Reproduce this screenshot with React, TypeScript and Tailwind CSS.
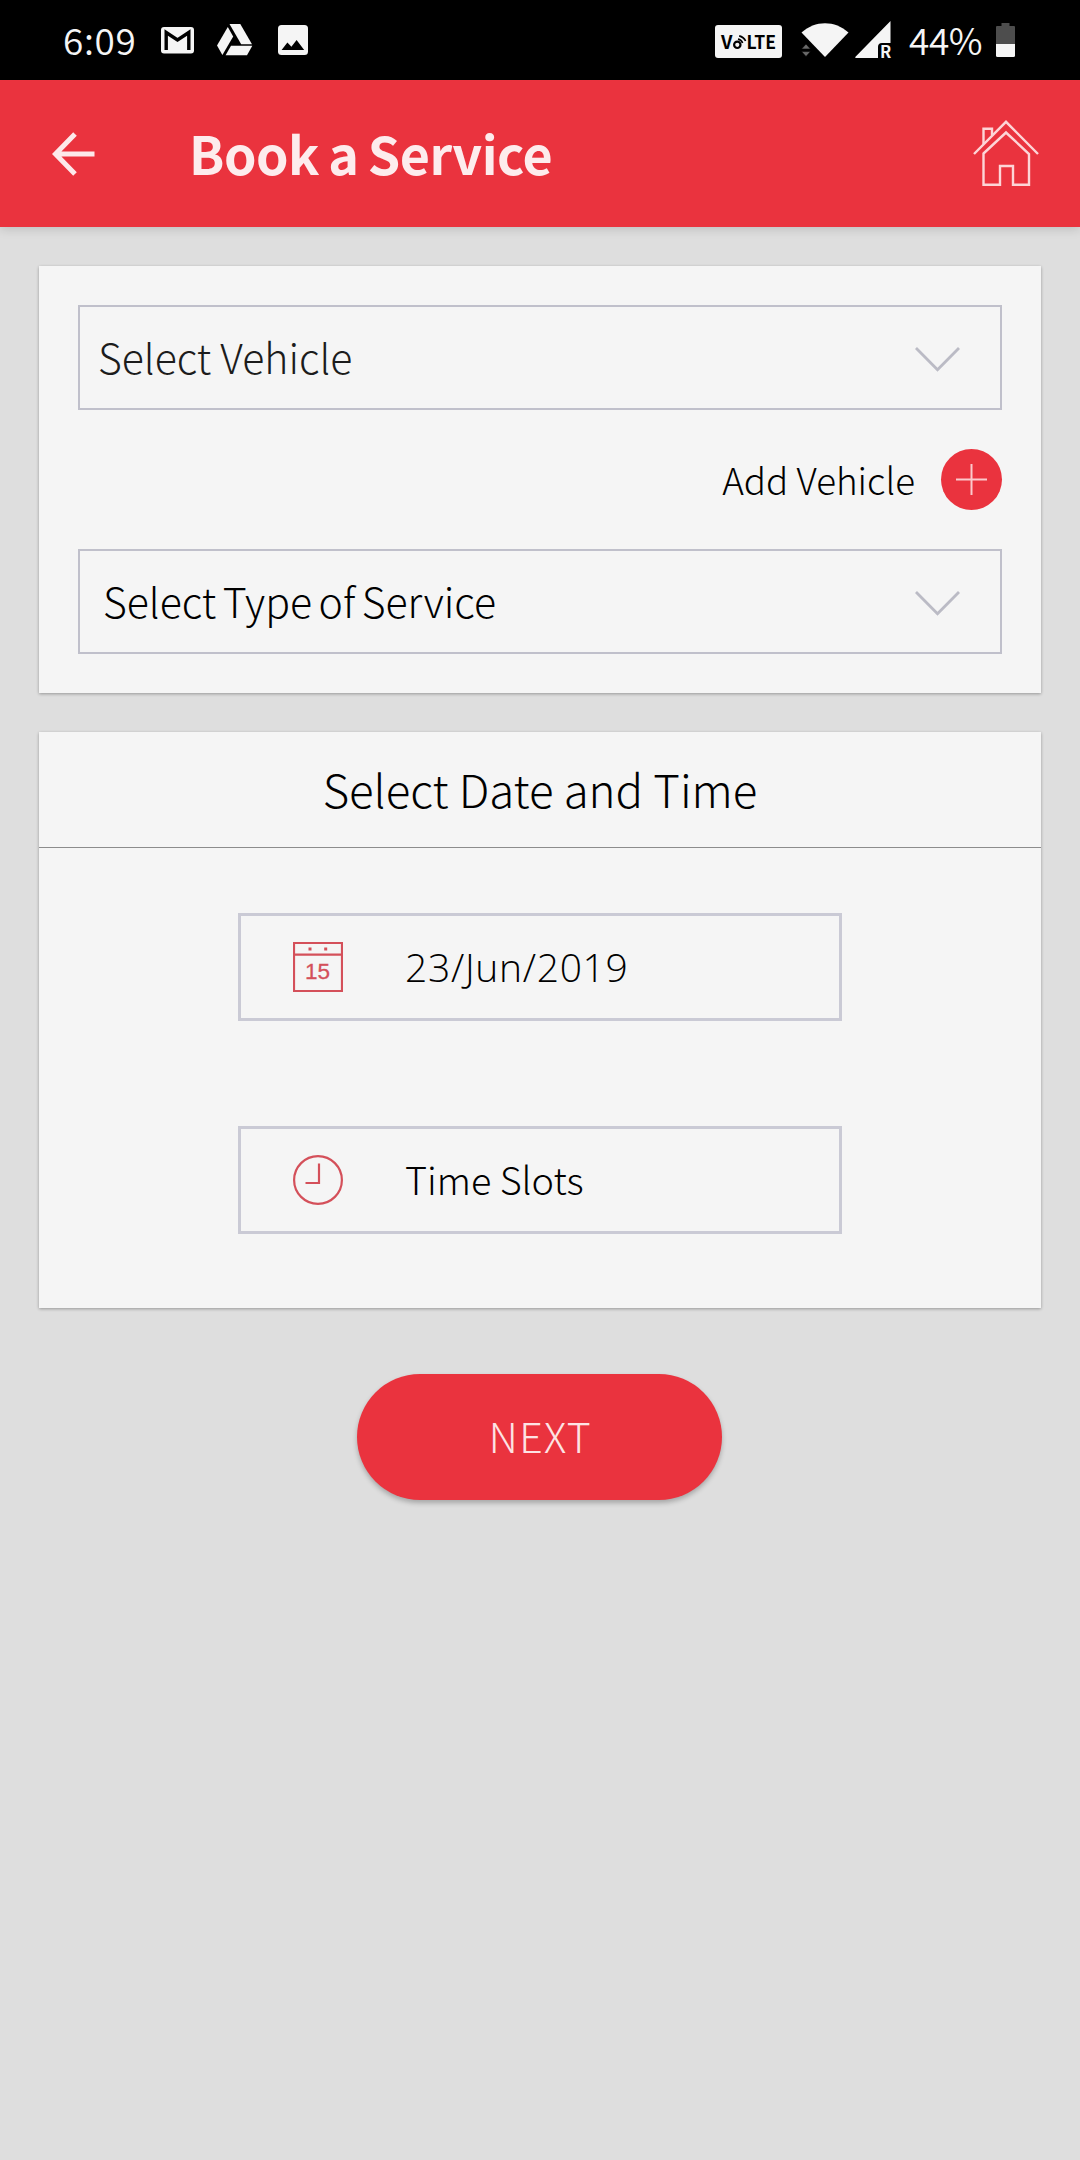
import React from "react";
import clsx from "clsx";

const GmailIcon = () => (
  <svg width="33" height="27" viewBox="0 0 33 27">
    <rect width="33" height="26.5" rx="3" fill="#f5f5f5" />
    <path d="M5.2 23V5.5L16.5 13L27.8 5.5V23" fill="none" stroke="#000" strokeWidth="3.4" />
  </svg>
);

const DriveIcon = () => (
  <svg width="36" height="32" viewBox="0 0 36 32" fill="#f5f5f5">
    <path d="M12.5 0H23.3L35 20.2H24.2Z" />
    <path d="M10.8 3L16.2 12.4L5.4 31L0 21.6Z" />
    <path d="M14 21.8H35.3L30 31.3H8.6Z" />
  </svg>
);

const PhotoIcon = () => (
  <svg width="30" height="30" viewBox="0 0 30 30">
    <rect width="30" height="30" rx="3.5" fill="#f5f5f5" />
    <path d="M3.6 25L9.4 17.6L13.4 21.8L18.6 15L26.2 25Z" fill="#000" />
  </svg>
);

const VolteIcon = () => (
  <svg width="67" height="33" viewBox="0 0 67 33">
    <rect width="67" height="33" rx="3" fill="#f5f5f5" />
    <g fontFamily="Noto Sans CJK SC, sans-serif" fontWeight="700" fontSize="18.5" fill="#000">
      <text x="6" y="23.5">V</text>
      <text x="31.5" y="23.5" textLength="29.5" lengthAdjust="spacingAndGlyphs">LTE</text>
    </g>
    <circle cx="22.3" cy="19.8" r="3.2" fill="none" stroke="#000" strokeWidth="2.2" />
    <path d="M23 14.2A6 6 0 0 1 27.6 18M24.2 10.8A9.5 9.5 0 0 1 30.6 16" fill="none" stroke="#000" strokeWidth="1.7" />
  </svg>
);

const WifiIcon = () => (
  <svg width="48" height="34" viewBox="0 0 48 34">
    <path d="M0.5 9.5C14 -3 34 -3 47.5 9.5L24 34Z" fill="#f5f5f5" />
    <path d="M0.5 26L5 21L9.5 26ZM0.5 28.6L5 33.5L9.5 28.6Z" fill="#6a6a6a" stroke="#000" strokeWidth="0.6" />
  </svg>
);

const SignalIcon = () => (
  <svg className="overflow-visible" width="36" height="38" viewBox="0 0 36 38">
    <path d="M35.5 0V22H27Q23 22 23 26V37H1Q-0.5 37 0.5 35.8Z" fill="#f5f5f5" />
    <text x="25" y="37.2" fontFamily="Noto Sans CJK SC, sans-serif" fontWeight="700" fontSize="16.5" fill="#f5f5f5">
      R
    </text>
  </svg>
);

const BatteryIcon = () => (
  <svg width="19" height="34" viewBox="0 0 19 34">
    <path d="M5.5 0H13.5V3H18Q19 3 19 4V21H0V4Q0 3 1 3H5.5Z" fill="#4d4d4d" />
    <path d="M0 21H19V32.5Q19 34 17.5 34H1.5Q0 34 0 32.5Z" fill="#f5f5f5" />
  </svg>
);

const BackIcon = () => (
  <svg width="44" height="44" viewBox="0 0 44 44" fill="none" stroke="#fde9ea" strokeWidth="5">
    <path d="M43.5 22H4.5M24 2L4.5 22L24 42" />
  </svg>
);

const HomeIcon = () => (
  <svg width="66" height="68" viewBox="0 0 66 68" fill="none" stroke="#fdd5d7" strokeWidth="2.4">
    <path d="M1 34L33 1.8L65 34" />
    <path d="M10.5 24V8.7H19V15" />
    <path d="M10.5 33.5L33 12.5L56 34V64.7H40V46H27V64.7H10.5Z" />
  </svg>
);

const ChevronIcon = () => (
  <svg width="45" height="25" viewBox="0 0 45 25" fill="none" stroke="#bbbbc5" strokeWidth="2.8">
    <path d="M1 1L22.5 22.8L44 1" />
  </svg>
);

const CalendarIcon = () => (
  <svg width="50" height="50" viewBox="0 0 50 50" fill="none" stroke="#d4505a" strokeWidth="2.2">
    <path d="M1 1H49V49H1ZM1 12.7H49" />
    <path d="M15.5 7H18.5M31.2 7H34.2" strokeWidth="3" />
    <text x="12" y="36.8" fontFamily="Liberation Sans, sans-serif" fontWeight="400" fontSize="22.5" fill="#d4505a" stroke="#d4505a" strokeWidth="0.3">
      15
    </text>
  </svg>
);

const ClockIcon = () => (
  <svg width="50" height="50" viewBox="0 0 50 50" fill="none" stroke="#d4505a" strokeWidth="2.2">
    <circle cx="25" cy="25" r="23.9" />
    <path d="M26 8.5V28H12.5" />
  </svg>
);

const Card = ({ className, children }: { className?: string; children: React.ReactNode }) => (
  <div className={clsx("mx-[39px] bg-[#f5f5f5] shadow-[0_1px_3px_rgba(0,0,0,0.32)]", className)}>
    {children}
  </div>
);

const SelectBox = ({ className, label }: { className: string; label: string }) => (
  <button
    className={clsx(
      "w-full h-[105px] flex items-center justify-between border-2 border-[#c0c0cb] pr-[40px] text-[41px] leading-none",
      className
    )}
  >
    <span className="pb-[3px] whitespace-nowrap">{label}</span>
    <span className="pt-[3px]">
      <ChevronIcon />
    </span>
  </button>
);

const PickerBox = ({
  icon,
  label,
  className,
}: {
  icon: React.ReactNode;
  label: string;
  className: string;
}) => (
  <button className="w-[604px] h-[108px] flex items-center gap-[62px] border-3 border-[#cacad5] pl-[52px] leading-none">
    {icon}
    <span className={clsx("whitespace-nowrap", className)}>{label}</span>
  </button>
);

const StatusBar = () => (
  <div className="h-[80px] bg-black text-[#f5f5f5] flex items-center justify-between pl-[63px] pr-[65px] text-[37px] leading-none">
    <div className="flex items-center">
      <span className="w-[98px] pb-[2px] font-[350] tracking-[0.6px]">6:09</span>
      <GmailIcon />
      <span className="ml-[23px]">
        <DriveIcon />
      </span>
      <span className="ml-[25px]">
        <PhotoIcon />
      </span>
    </div>
    <div className="flex items-center">
      <span className="pt-[3px]">
        <VolteIcon />
      </span>
      <span className="ml-[19px]">
        <WifiIcon />
      </span>
      <span className="ml-[6px]">
        <SignalIcon />
      </span>
      <span className="w-[88px] ml-[18px] pb-[2px] font-[350] tracking-[-0.4px]">44%</span>
      <span className="-ml-px">
        <BatteryIcon />
      </span>
    </div>
  </div>
);

const App = () => {
  return (
    <div className="w-[1080px] h-[2160px] bg-[#dedede] text-black font-light font-['Noto_Sans_CJK_SC','Noto_Sans',sans-serif] [&_svg]:block">
      <StatusBar />
      <header className="h-[147px] bg-[#ea333e] flex items-center shadow-[0_2px_10px_rgba(0,0,0,0.15)] pl-[51px] pr-[41px]">
        <BackIcon />
        <h1 className="ml-[94px] pb-[2px] text-[52px] leading-none font-bold text-[#fdeced] tracking-[-0.5px] [word-spacing:-2px]">
          Book a Service
        </h1>
        <span className="ml-auto">
          <HomeIcon />
        </span>
      </header>

      <Card className="mt-[39px] h-[427px] p-[39px]">
        <SelectBox label="Select Vehicle" className="pl-[18px] text-[#1c1c1c]" />
        <div className="my-[39px] h-[61px] flex items-center justify-end gap-[26px]">
          <span className="pb-px text-[36.8px] leading-none">Add Vehicle</span>
          <button className="size-[61px] rounded-full bg-[#ea333e] flex items-center justify-center">
            <svg width="31" height="31" viewBox="0 0 31 31" stroke="#fbc9cc" strokeWidth="2">
              <path d="M15.5 0V31M0 15.5H31" />
            </svg>
          </button>
        </div>
        <SelectBox label="Select Type of Service" className="pl-[23px] [word-spacing:-2.5px]" />
      </Card>

      <Card className="mt-[39px] h-[576px]">
        <h2 className="h-[116px] flex items-center justify-center border-b border-[#8c8c8c] pb-[2px] text-[45.6px] leading-none">
          Select Date and Time
        </h2>
        <div className="pt-[65px] flex flex-col items-center gap-[105px]">
          <PickerBox
            icon={<CalendarIcon />}
            label="23/Jun/2019"
            className="pb-[2px] font-['Open_Sans',sans-serif] text-[39px] tracking-[0.7px]"
          />
          <PickerBox icon={<ClockIcon />} label="Time Slots" className="pb-[3px] text-[37.8px]" />
        </div>
      </Card>

      <button className="mt-[66px] ml-[357px] w-[365px] h-[126px] rounded-full bg-[#ea333e] text-[#fde3e4] flex items-center justify-center pb-[3px] pl-[2px] text-[41px] leading-none tracking-[1.4px] shadow-[0_3px_5px_rgba(0,0,0,0.25)]">
        NEXT
      </button>
    </div>
  );
};

export default App;
